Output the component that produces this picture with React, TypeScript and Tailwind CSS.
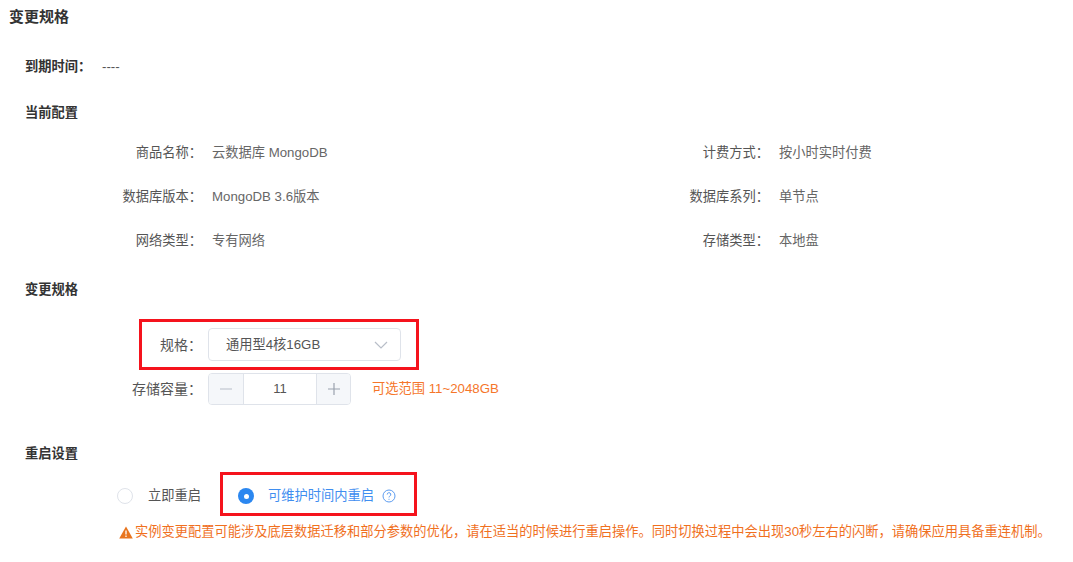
import React from "react";

const font = { fontFamily: '"Liberation Sans","Noto Sans CJK SC",sans-serif' };
const COLON = "\uFF1A";
const COMMA = "\uFF0C";

function Info({ label, value }: { label: string; value: string }) {
  return (
    <div className="flex h-[44px] items-center">
      <span className="w-[202px] shrink-0 text-right text-[#555]">{label}{COLON}</span>
      <span className="ml-[10px] text-[#666]">{value}</span>
    </div>
  );
}

function Heading({ children }: { children: React.ReactNode }) {
  return <div className="pl-[25px] font-semibold leading-[20px] text-[#333]">{children}</div>;
}

export default function App() {
  return (
    <div style={font} className="h-[562px] w-[1073px] overflow-hidden bg-white text-[13.25px] leading-[20px]">
      <div className="pl-[9px] pt-[7px] text-[15px] font-semibold text-[#333]">变更规格</div>

      <div className="mt-[30px] flex items-center pl-[25px]">
        <span className="w-[77px] font-semibold text-[#333]">到期时间{COLON}</span>
        <span className="text-[#555]">----</span>
      </div>

      <div className="mt-[26px]">
        <Heading>当前配置</Heading>
      </div>

      <div className="mt-[8px] grid grid-cols-[567px_1fr]">
        <Info label="商品名称" value="云数据库 MongoDB" />
        <Info label="计费方式" value="按小时实时付费" />
        <Info label="数据库版本" value="MongoDB 3.6版本" />
        <Info label="数据库系列" value="单节点" />
        <Info label="网络类型" value="专有网络" />
        <Info label="存储类型" value="本地盘" />
      </div>

      <div className="mt-[17px]">
        <Heading>变更规格</Heading>
      </div>

      <div className="ml-[139px] mt-[19px] flex h-[51px] w-[280px] items-center border-[3px] border-[#f5131d]">
        <span className="w-[60px] shrink-0 text-right text-[14px] text-[#555]">规格{COLON}</span>
        <div className="ml-[6px] flex h-[33px] w-[193px] items-center justify-between rounded-[4px] border border-[#dfe3ea] pl-[17px] pr-[12px] text-[#555]">
          <span>通用型4核16GB</span>
          <svg width="14" height="8" viewBox="0 0 14 8" fill="none" stroke="#b8bec8" strokeWidth="1.2">
            <path d="M1 1l6 6 6-6" />
          </svg>
        </div>
      </div>

      <div className="mt-[3px] flex h-[32px] items-center">
        <span className="w-[202px] shrink-0 text-right text-[14px] text-[#555]">存储容量{COLON}</span>
        <div className="ml-[6px] flex h-[32px] w-[143px] overflow-hidden rounded-[4px] border border-[#dfe3ea]">
          <div className="flex w-[35px] items-center justify-center border-r border-[#dfe3ea] bg-[#f5f7fa]">
            <svg width="12" height="12" viewBox="0 0 12 12" stroke="#b8bec8" strokeWidth="1.2"><path d="M0 6h12" /></svg>
          </div>
          <div className="flex flex-1 items-center justify-center text-[13px] font-medium text-[#555]">11</div>
          <div className="flex w-[34px] items-center justify-center border-l border-[#dfe3ea] bg-[#f5f7fa]">
            <svg width="12" height="12" viewBox="0 0 12 12" stroke="#9aa1ad" strokeWidth="1.2"><path d="M0 6h12M6 0v12" /></svg>
          </div>
        </div>
        <span className="ml-[21px] text-[#f5762a]">可选范围 11~2048GB</span>
      </div>

      <div className="mt-[39px]">
        <Heading>重启设置</Heading>
      </div>

      <div className="ml-[117px] mt-[8px] flex items-center">
        <span className="h-[16px] w-[16px] rounded-full border border-[#dfe3ea]" />
        <span className="ml-[15px] text-[#555]">立即重启</span>
        <div className="mb-[4px] ml-[19px] flex h-[44px] w-[197px] items-center border-[3px] border-[#f5131d] pl-[15px] pt-[4px]">
          <span className="flex h-[16px] w-[16px] items-center justify-center rounded-full bg-[#2b87f0]">
            <span className="h-[5px] w-[5px] rounded-full bg-white" />
          </span>
          <span className="ml-[14px] text-[#3f8ef0]">可维护时间内重启</span>
          <svg className="ml-[8px]" width="14" height="14" viewBox="0 0 14 14" fill="none" stroke="#5c9cf0" strokeWidth="1">
            <circle cx="7" cy="7" r="6" />
            <path d="M5.2 5.5a1.8 1.8 0 1 1 2.6 1.6c-.6.3-.8.7-.8 1.3" />
            <path d="M7 9.8v1" />
          </svg>
        </div>
      </div>

      <div className="ml-[119px] mt-[2px] flex items-center text-[#f0701e]">
        <svg width="14" height="13" viewBox="0 0 14 13" className="mr-[2px] shrink-0">
          <path d="M7 .5L13.8 12.5H.2z" fill="#e8751f" />
          <path d="M7 4.5v4M7 9.6v1.3" stroke="#fff" strokeWidth="1.3" />
        </svg>
        <span className="whitespace-nowrap">实例变更配置可能涉及底层数据迁移和部分参数的优化{COMMA}请在适当的时候进行重启操作。同时切换过程中会出现30秒左右的闪断{COMMA}请确保应用具备重连机制。</span>
      </div>
    </div>
  );
}
